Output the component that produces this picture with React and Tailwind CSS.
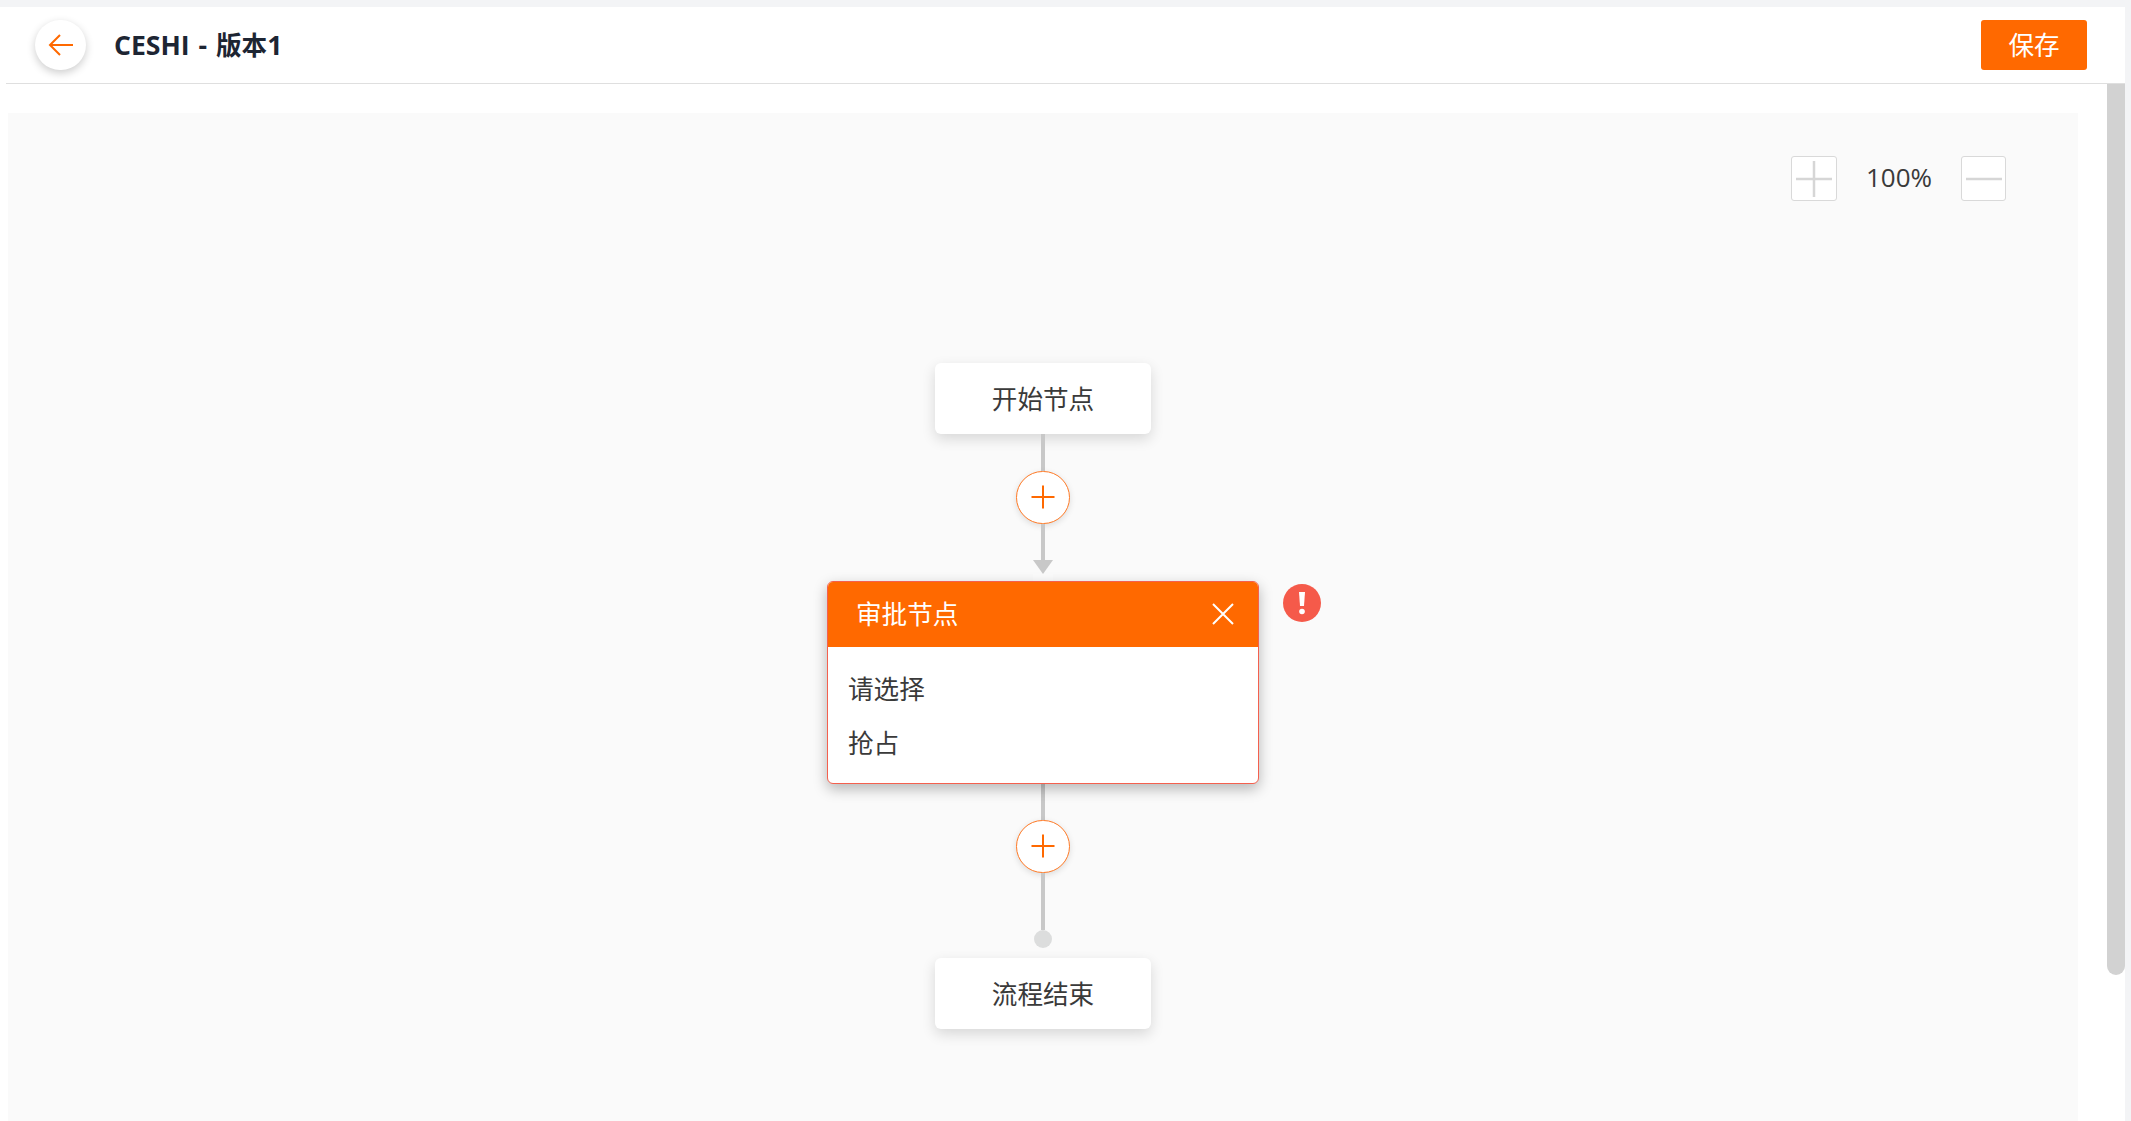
import React from "react";

const FONT = "font-['Open_Sans','Noto_Sans_CJK_SC',sans-serif]";

function Line({ h }) {
  return <div className="w-[4px] shrink-0 bg-[#c8c8c8]" style={{ height: h }} />;
}

function AddButton() {
  return (
    <div className="flex h-[53px] w-[54px] shrink-0 items-center justify-center rounded-full border border-[#ff7a26] bg-white shadow-[0_2px_6px_rgba(0,0,0,0.12)]">
      <svg width="24" height="24" viewBox="0 0 24 24" fill="none" stroke="#ff6900" strokeWidth="2" className="-mt-[2px]">
        <path d="M0.5 12H23.5M12 0.5V23.5" />
      </svg>
    </div>
  );
}

function PlainNode({ children }) {
  return (
    <div className="flex h-[71px] w-[216px] shrink-0 items-center justify-center rounded-[6px] bg-white pt-[3px] text-[25.6px] text-[#3a3a3a] shadow-[0_5px_14px_rgba(0,0,0,0.14)]">
      {children}
    </div>
  );
}

export default function App() {
  return (
    <div className={`${FONT} h-[1121px] w-[2131px] overflow-hidden bg-[#f3f4f6] pr-[6px] pt-[7px]`}>
      <div className="h-full bg-white">
        <div className="ml-[6px] flex h-[77px] items-center justify-between border-b border-[#dfdfdf] pb-[1px] pl-[29px] pr-[38px]">
          <div className="flex items-center gap-[28px]">
            <button className="flex h-[50px] w-[51px] items-center justify-center rounded-full bg-white shadow-[0_3px_8px_rgba(0,0,0,0.2)]">
              <svg width="26" height="24" viewBox="0 0 26 24" fill="none" stroke="#ff6900" strokeWidth="2">
                <path d="M25 12H2M12 2L2 12L12 22" />
              </svg>
            </button>
            <h1 className="pt-[1px] text-[26.6px] font-bold leading-none text-[#1d2533] [word-spacing:2px]">
              CESHI - <span className="text-[25.6px]">版本</span>1
            </h1>
          </div>
          <button className="flex h-[50px] w-[106px] items-center justify-center rounded-[3px] bg-[#ff6900] pt-[3px] text-[25.6px] text-white">
            保存
          </button>
        </div>

        <div className="flex">
          <div className="ml-[8px] mr-[29px] mt-[29px] w-[2070px]">
            <div className="relative flex h-[1100px] flex-col items-center bg-[#fafafa] pt-[250px]">
              <div className="absolute right-[72px] top-[43px] flex items-center">
                <div className="flex h-[45px] w-[46px] items-center justify-center rounded-[3px] border border-[#d9d9d9] bg-white">
                  <svg width="36" height="36" viewBox="0 0 36 36" fill="none" stroke="#d6d6d6" strokeWidth="2.5">
                    <path d="M0 18H36M18 0V36" />
                  </svg>
                </div>
                <span className="-mt-[2px] w-[124px] text-center text-[26px] text-[#3a3a3a]">100%</span>
                <div className="flex h-[45px] w-[45px] items-center justify-center rounded-[3px] border border-[#d9d9d9] bg-white">
                  <svg width="36" height="4" viewBox="0 0 36 4" fill="none" stroke="#d6d6d6" strokeWidth="2.5">
                    <path d="M0 2H36" />
                  </svg>
                </div>
              </div>

              <PlainNode>开始节点</PlainNode>
              <Line h={37} />
              <AddButton />
              <Line h={36} />
              <svg width="20" height="14" viewBox="0 0 20 14" className="shrink-0">
                <path d="M0 0H20L10 14Z" fill="#c8c8c8" />
              </svg>
              <div className="h-[7px] w-[20px] shrink-0 bg-[#fcfcfc]" />

              <div className="relative w-[432px] shrink-0">
                <div className="overflow-hidden rounded-[6px] border border-[#f4604e] bg-white shadow-[0_5px_14px_rgba(0,0,0,0.28)]">
                  <div className="flex h-[65px] items-center justify-between bg-[#ff6900] pl-[28px] pr-[23px] text-[25.6px] text-white">
                    <span className="pt-[1px]">审批节点</span>
                    <svg width="24" height="24" viewBox="0 0 24 24" fill="none" stroke="white" strokeWidth="2" className="-mt-[2px]">
                      <path d="M2 2L22 22M22 2L2 22" />
                    </svg>
                  </div>
                  <div className="flex h-[136px] flex-col gap-[14px] px-[20px] pt-[23px] text-[25.6px] leading-[40px] text-[#3a3a3a]">
                    <div>请选择</div>
                    <div>抢占</div>
                  </div>
                </div>
                <div className="absolute left-[456px] top-[3px] flex h-[38px] w-[38px] items-center justify-center rounded-full bg-[#f55a4a]">
                  <svg width="8" height="24" viewBox="0 0 8 24" fill="white">
                    <path d="M1 1H7L6 15H2Z" />
                    <circle cx="4" cy="20.5" r="2.8" />
                  </svg>
                </div>
              </div>

              <Line h={36} />
              <AddButton />
              <Line h={57} />
              <div className="h-[18px] w-[18px] shrink-0 rounded-full bg-[#dcdddd]" />
              <div className="h-[10px] shrink-0" />
              <PlainNode>流程结束</PlainNode>
            </div>
          </div>
          <div className="h-[891px] w-[18px] shrink-0 rounded-b-[9px] bg-[#d2d2d2]" />
        </div>
      </div>
    </div>
  );
}
